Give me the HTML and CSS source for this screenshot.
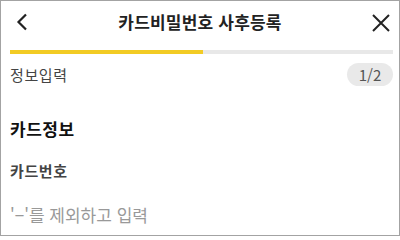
FILE: index.html
```html
<!DOCTYPE html>
<html lang="ko">
<head>
<meta charset="utf-8">
<link rel="stylesheet" href="styles.css">
</head>
<body>
<div class="screen">
  <header class="topbar">
    <button class="icon-btn back" aria-label="뒤로">
      <svg width="12" height="18" viewBox="0 0 12 18"><path d="M10 1.5 L2.5 9 L10 16.5" fill="none" stroke="#222" stroke-width="2.2"/></svg>
    </button>
    <h1 class="title">카드비밀번호 사후등록</h1>
    <button class="icon-btn close" aria-label="닫기">
      <svg width="18" height="18" viewBox="0 0 18 18"><path d="M1 1 L17 17 M17 1 L1 17" fill="none" stroke="#222" stroke-width="2"/></svg>
    </button>
  </header>
  <div class="progress"><div class="progress-fill" style="width:50.3%"></div></div>
  <div class="step-row">
    <span class="step-label">정보입력</span>
    <span class="step-badge">1/2</span>
  </div>
  <section class="card-section">
    <h2 class="section-title">카드정보</h2>
    <div class="field-label">카드번호</div>
    <div class="field-input">'−'를 제외하고 입력</div>
  </section>
</div>
</body>
</html>
```

FILE: styles.css
```css
* { box-sizing: border-box; }
html, body { margin: 0; padding: 0; background: #fff; }
body { font-family: "Noto Sans CJK KR", "Noto Sans", sans-serif; }
.screen {
  width: 400px;
  height: 236px;
  border: 1px solid #a3a3a3;
  background: #fff;
  overflow: hidden;
  display: flex;
  flex-direction: column;
}
.topbar {
  height: 44px;
  display: flex;
  align-items: center;
  justify-content: space-between;
  padding: 0 9px 3px 15px;
}
.icon-btn {
  border: 0;
  background: none;
  padding: 0;
  display: flex;
  align-items: center;
  justify-content: center;
}
.back { margin-top: 1px; }
.close { margin-top: 2px; }
.title {
  margin: 0;
  font-size: 17px;
  font-weight: 700;
  color: #222;
  line-height: 20px;
  letter-spacing: 0.2px;
}
.progress {
  margin: 5px 6px 0 9px;
  height: 4px;
  background: #e8e8e8;
}
.progress-fill {
  height: 100%;
  background: #f2cb24;
}
.step-row {
  display: flex;
  align-items: center;
  justify-content: space-between;
  padding: 9px 6px 0 9px;
}
.step-label {
  font-size: 15px;
  color: #444;
  line-height: 18px;
  letter-spacing: 0.6px;
}
.step-badge {
  width: 46px;
  height: 23px;
  border-radius: 12px;
  background: #e9e9e9;
  color: #555;
  font-size: 15px;
  display: flex;
  align-items: center;
  justify-content: center;
}
.card-section {
  padding: 0 9px;
}
.section-title {
  margin: 32px 0 0;
  font-size: 17px;
  font-weight: 700;
  color: #111;
  line-height: 22px;
  letter-spacing: 0.5px;
}
.field-label {
  margin-top: 21px;
  font-size: 15px;
  font-weight: 700;
  color: #444;
  line-height: 20px;
  letter-spacing: 0.6px;
}
.field-input {
  margin-top: 24px;
  font-size: 17px;
  color: #999;
  line-height: 20px;
}
```
